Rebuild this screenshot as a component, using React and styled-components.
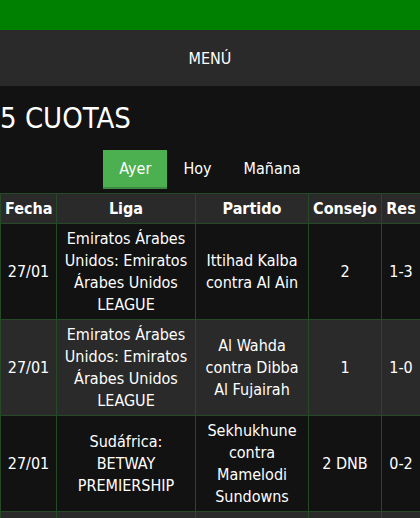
import React, { useState } from 'react'
import styled, { createGlobalStyle } from 'styled-components';

const GlobalStyle = createGlobalStyle`
    body {
        margin: 0;
        background: #121212;
        color: #fff;
        font-family: "DejaVu Sans Condensed", "DejaVu Sans", sans-serif;
        font-stretch: condensed;
    }
`;

const columns = [
    { label: 'Fecha', width: 56 },
    { label: 'Liga', width: 139 },
    { label: 'Partido', width: 113 },
    { label: 'Consejo', width: 73 },
    { label: 'Res', width: 39 },
];

const tips = [
    {
        date: '27/01',
        league: 'Emiratos Árabes Unidos: Emiratos Árabes Unidos LEAGUE',
        match: 'Ittihad Kalba contra Al Ain',
        tip: '2',
        result: '1-3',
    },
    {
        date: '27/01',
        league: 'Emiratos Árabes Unidos: Emiratos Árabes Unidos LEAGUE',
        match: 'Al Wahda contra Dibba Al Fujairah',
        tip: '1',
        result: '1-0',
    },
    {
        date: '27/01',
        league: 'Sudáfrica: BETWAY PREMIERSHIP',
        match: 'Sekhukhune contra Mamelodi Sundowns',
        tip: '2 DNB',
        result: '0-2',
    },
    {
        date: '27/01',
        league: 'Sudáfrica: BETWAY PREMIERSHIP',
        match: 'Chippa United contra Orlando Pirates',
        tip: '2',
        result: '0-1',
    },
];

function App() {
    const [day, setDay] = useState('Ayer');

    return (
        <Page>
            <GlobalStyle />
            <TopBar />
            <MenuBar>MENÚ</MenuBar>
            <Title>5 CUOTAS</Title>
            <Tabs>
                {['Ayer', 'Hoy', 'Mañana'].map((d) => (
                    <Tab key={d} $active={day === d} onClick={() => setDay(d)}>
                        {d}
                    </Tab>
                ))}
            </Tabs>
            <Table>
                <colgroup>
                    {columns.map((c) => (
                        <col key={c.label} width={c.width} />
                    ))}
                </colgroup>
                <thead>
                    <tr>
                        {columns.map((c) => (
                            <Th key={c.label}>{c.label}</Th>
                        ))}
                    </tr>
                </thead>
                <tbody>
                    {tips.map((t, i) => (
                        <Row key={i} $alt={i % 2 === 1}>
                            <Td>{t.date}</Td>
                            <Td>{t.league}</Td>
                            <Td>{t.match}</Td>
                            <Td>{t.tip}</Td>
                            <Td>{t.result}</Td>
                        </Row>
                    ))}
                </tbody>
            </Table>
        </Page>
    )
}

export default App;

const Page = styled.div`
    min-height: 100vh;
    background: #121212;
`;

const TopBar = styled.div`
    height: 30px;
    background: #008000;
`;

const MenuBar = styled.div`
    height: 56px;
    background: #2a2a2a;
    display: flex;
    align-items: center;
    justify-content: center;
    font-size: 16px;
`;

const Title = styled.h1`
    margin: 15px 0 15px 0;
    font-size: 29px;
    font-weight: normal;
    line-height: 34px;
`;

const Tabs = styled.div`
    display: flex;
    justify-content: center;
    margin-bottom: 4px;
`;

const Tab = styled.button`
    border: none;
    border-bottom: 2px solid ${(p) => (p.$active ? '#3d8b40' : 'transparent')};
    background: ${(p) => (p.$active ? '#4caf50' : 'transparent')};
    color: #fff;
    font-family: inherit;
    font-stretch: condensed;
    font-size: 16px;
    height: 39px;
    padding: 0 16px;
    cursor: pointer;
`;

const Table = styled.table`
    width: 100%;
    table-layout: fixed;
    border-collapse: collapse;
    font-size: 16px;
    line-height: 22px;
`;

const Th = styled.th`
    background: #2a2a2a;
    border: 1px solid #254a25;
    padding: 3.5px 4px;
    font-weight: bold;
    text-align: center;
    overflow: hidden;
    white-space: nowrap;
`;

const Row = styled.tr`
    background: ${(p) => (p.$alt ? '#2a2a2a' : '#121212')};
`;

const Td = styled.td`
    border: 1px solid #254a25;
    padding: 3.5px 4px;
    text-align: center;
    vertical-align: middle;
`;
